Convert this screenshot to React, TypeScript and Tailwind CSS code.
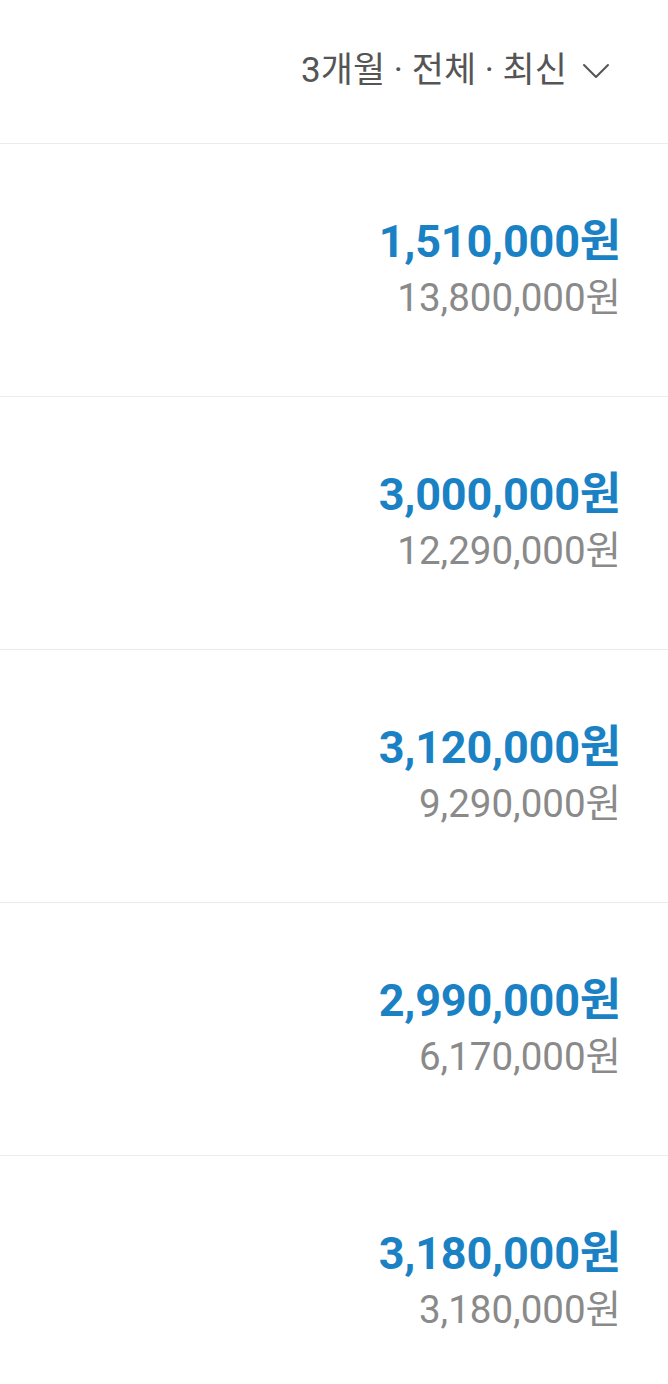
import React from 'react'

const rows = [
  { amount: '1,510,000원', total: '13,800,000원' },
  { amount: '3,000,000원', total: '12,290,000원' },
  { amount: '3,120,000원', total: '9,290,000원' },
  { amount: '2,990,000원', total: '6,170,000원' },
  { amount: '3,180,000원', total: '3,180,000원' },
]

export default function App() {
  return (
    <div className="w-[668px] h-[1384px] overflow-hidden bg-white font-['Roboto','Noto_Sans_CJK_KR',sans-serif]">
      <div className="h-[144px] flex items-center justify-end pr-[58px] border-b border-[#ececec]">
        <span className="text-[35px] text-[#555555] leading-none -mt-[2px]">3개월 · 전체 · 최신</span>
        <svg width="28" height="18" viewBox="0 0 28 18" fill="none" className="ml-[15px] -mt-[1px]">
          <path d="M2 3 L14 15 L26 3" stroke="#555555" strokeWidth="2" strokeLinecap="round" strokeLinejoin="round" />
        </svg>
      </div>
      {rows.map((r, i) => (
        <div key={i} className="h-[253px] flex flex-col items-end justify-center pr-[47px] border-b border-[#ececec]">
          <div className="text-[45px] font-bold text-[#1a82c4] leading-[56px] tracking-[-0.2px]">{r.amount}</div>
          <div className="text-[38.5px] text-[#8a8a8a] leading-[56px]">{r.total}</div>
        </div>
      ))}
    </div>
  )
}
